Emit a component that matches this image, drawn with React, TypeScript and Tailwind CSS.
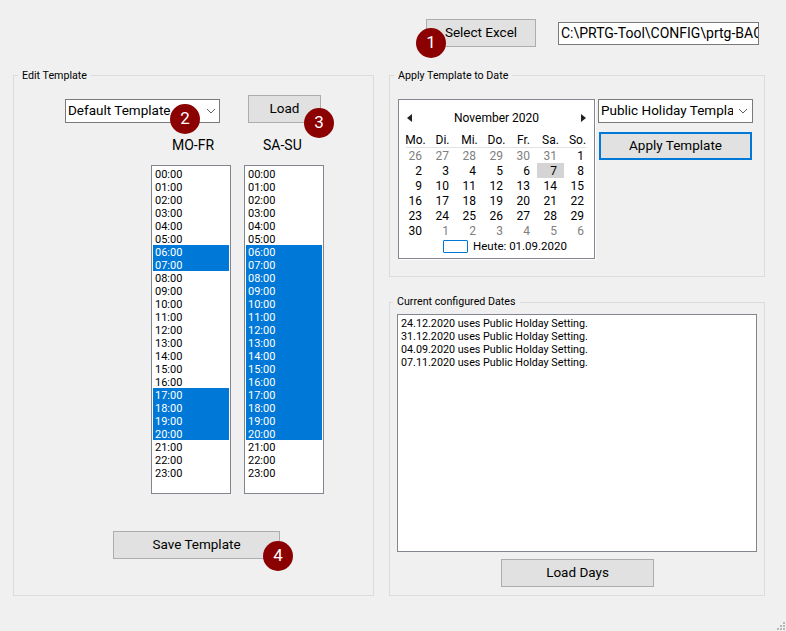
const hours = Array.from({ length: 24 }, (_, i) => `${String(i).padStart(2, '0')}:00`);
const weekdaySelected = ['06:00', '07:00', '17:00', '18:00', '19:00', '20:00'];
const weekendSelected = hours.slice(6, 21);

const dayNames = ['Mo.', 'Di.', 'Mi.', 'Do.', 'Fr.', 'Sa.', 'So.'];
const days = [
  ...[26, 27, 28, 29, 30, 31].map((d) => ({ d, muted: true })),
  ...Array.from({ length: 30 }, (_, i) => ({ d: i + 1, muted: false })),
  ...[1, 2, 3, 4, 5, 6].map((d) => ({ d, muted: true })),
];

const dates = ['24.12.2020', '31.12.2020', '04.09.2020', '07.11.2020'];

function Badge({ n, className }: { n: number; className: string }) {
  return (
    <div className={`absolute flex h-[30px] w-[30px] items-center justify-center rounded-full bg-[#8b0000] text-[17px] text-white ${className}`}>
      {n}
    </div>
  );
}

function Chevron() {
  return (
    <svg width="10" height="6" viewBox="0 0 10 6" className="shrink-0">
      <polyline points="1,1 5,5 9,1" fill="none" stroke="#606060" strokeWidth="1" />
    </svg>
  );
}

function Combo({ label, textWidth, className }: { label: string; textWidth: string; className: string }) {
  return (
    <div className={`flex h-[24px] w-[155px] items-center border border-[#7a7a7a] bg-white pl-[2px] text-[13.5px] ${className}`}>
      <span className={`mb-[2px] overflow-hidden whitespace-nowrap ${textWidth}`}>{label}</span>
      <div className="flex flex-1 justify-center">
        <Chevron />
      </div>
    </div>
  );
}

function Button({ label, className }: { label: string; className: string }) {
  return (
    <div className={`flex h-[28px] items-center justify-center border border-[#adadad] bg-[#e1e1e1] pb-[2px] text-[13.5px] ${className}`}>
      {label}
    </div>
  );
}

function HourList({ selected }: { selected: string[] }) {
  return (
    <div className="h-[329px] w-[80px] border border-[#82878f] bg-white p-px text-[11px] leading-[15px]">
      {hours.map((h) => (
        <div key={h} className={`h-[13px] pl-[2px] ${selected.includes(h) ? 'bg-[#0078d7] text-white' : ''}`}>
          {h}
        </div>
      ))}
    </div>
  );
}

function Calendar() {
  return (
    <div className="h-[160px] w-[197px] shrink-0 border border-[#82878f] bg-white pt-[10px] pl-[3px] shadow-[1px_1px_0_#fff]">
      <div className="flex h-[15px] w-[189px] items-center justify-between px-[5px] text-[12px]">
        <svg width="5" height="8" viewBox="0 0 5 8">
          <polygon points="5,0 5,8 0,4" fill="#222" />
        </svg>
        <span>November 2020</span>
        <svg width="5" height="8" viewBox="0 0 5 8">
          <polygon points="0,0 0,8 5,4" fill="#222" />
        </svg>
      </div>
      <div className="mt-[7px] grid w-[189px] grid-cols-[repeat(7,27px)] text-[12px] leading-[17px]">
        {dayNames.map((n) => (
          <div key={n} className="h-[15px] text-center">
            {n}
          </div>
        ))}
      </div>
      <div className="mx-[4px] h-px w-[181px] bg-[#e3e3e3]" />
      <div className="grid w-[189px] grid-cols-[repeat(7,27px)] text-[12px] leading-[17px]">
        {days.map((c, i) => (
          <div
            key={i}
            className={`h-[15px] pr-[7px] text-right ${c.muted ? 'text-[#808080]' : ''} ${!c.muted && c.d === 7 ? 'bg-[#d4d4d4]' : ''}`}
          >
            {c.d}
          </div>
        ))}
      </div>
      <div className="mt-[2px] flex h-[13px] items-center pl-[41px] text-[11.5px]">
        <div className="h-[13px] w-[25px] rounded-[1px] border border-[#0078d7]" />
        <span className="ml-[5px]">Heute: 01.09.2020</span>
      </div>
    </div>
  );
}

export default function App() {
  return (
    <div className="relative h-[631px] w-[786px] overflow-hidden bg-[#f0f0f0] pt-[19px] pl-[13px] font-['Roboto',sans-serif] text-black">
      <div className="flex h-[28px] w-[746px] items-center">
        <Button label="Select Excel" className="ml-[413px] w-[110px]" />
        <div className="ml-[22px] h-[23px] w-[201px] overflow-hidden whitespace-nowrap border border-[#7a7a7a] bg-white pl-[2px] text-[14px] leading-[21px]">
          C:\PRTG-Tool\CONFIG\prtg-BACKUP
        </div>
      </div>

      <div className="mt-[21px] flex gap-[15px]">
        <fieldset className="h-[528px] w-[361px] border border-[#dcdcdc]">
          <legend className="ml-[4px] px-[4px] pt-[2px] text-[10.7px] leading-[12px]">Edit Template</legend>
          <div className="flex pt-[13px] pl-[51px]">
            <Combo label="Default Template" textWidth="w-[134px]" className="mt-[4px]" />
            <Button label="Load" className="ml-[28px] w-[73px]" />
          </div>
          <div className="mt-[14px] flex pl-[137px]">
            <div>
              <div className="h-[28px] pl-[21px] text-[14px] leading-[16px]">MO-FR</div>
              <HourList selected={weekdaySelected} />
            </div>
            <div className="ml-[13px]">
              <div className="h-[28px] pl-[19px] text-[14px] leading-[16px]">SA-SU</div>
              <HourList selected={weekendSelected} />
            </div>
          </div>
          <Button label="Save Template" className="mt-[37px] ml-[99px] w-[167px]" />
        </fieldset>

        <div className="flex w-[376px] flex-col gap-[18px]">
          <fieldset className="h-[209px] border border-[#dcdcdc]">
            <legend className="ml-[4px] px-[4px] pt-[2px] text-[10.7px] leading-[12px]">Apply Template to Date</legend>
            <div className="flex gap-[3px] pt-[17px] pl-[8px]">
              <Calendar />
              <div>
                <Combo label="Public Holiday Template" textWidth="w-[132px]" className="" />
                <div className="mt-[9px] ml-px flex h-[28px] w-[153px] items-center justify-center border-2 border-[#0078d7] bg-[#e1e1e1] pb-[2px] text-[13.5px]">
                  Apply Template
                </div>
              </div>
            </div>
          </fieldset>

          <fieldset className="h-[301px] border border-[#dcdcdc]">
            <legend className="ml-[3px] px-[4px] text-[10.7px] leading-[14px]">Current configured Dates</legend>
            <div className="px-[7px] pt-[5px]">
              <div className="h-[238px] w-[360px] border border-[#82878f] bg-white px-[3px] py-[2px] text-[10.75px] leading-[13px]">
                {dates.map((d) => (
                  <div key={d}>{d} uses Public Holday Setting.</div>
                ))}
              </div>
            </div>
            <Button label="Load Days" className="mt-[7px] ml-[111px] w-[153px]" />
          </fieldset>
        </div>
      </div>

      <Badge n={1} className="top-[28px] left-[416px]" />
      <Badge n={2} className="top-[104px] left-[170px]" />
      <Badge n={3} className="top-[108px] left-[304px]" />
      <Badge n={4} className="top-[541px] left-[263px]" />

      <svg width="8" height="8" viewBox="0 0 8 8" className="absolute right-[1px] bottom-[1px]">
        <g fill="#b8b8b8">
          <rect x="6" y="0" width="2" height="2" />
          <rect x="3" y="3" width="2" height="2" />
          <rect x="6" y="3" width="2" height="2" />
          <rect x="0" y="6" width="2" height="2" />
          <rect x="3" y="6" width="2" height="2" />
          <rect x="6" y="6" width="2" height="2" />
        </g>
      </svg>
    </div>
  );
}
